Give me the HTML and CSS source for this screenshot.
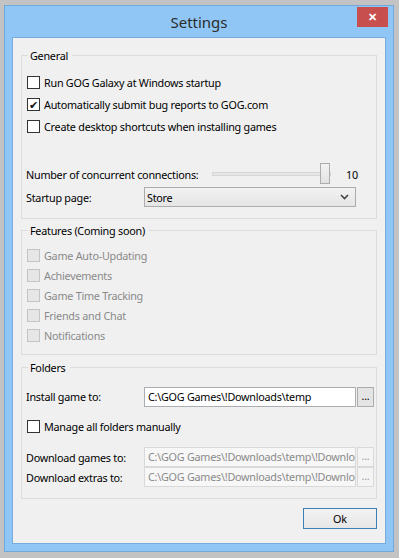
FILE: index.html
```html
<!DOCTYPE html>
<html lang="en">
<head>
  <meta charset="UTF-8" />
  <title>Settings</title>
  <link rel="stylesheet" href="styles.css">
</head>
<body>
  <div class="window">
    <div class="titlebar">
      <span></span>
      <div class="title">Settings</div>
      <div class="close">&#x2715;</div>
    </div>

    <div class="content">
      <fieldset class="group general">
        <legend>General</legend>
        <div class="check-row"><span class="box"></span>Run GOG Galaxy at Windows startup</div>
        <div class="check-row"><span class="box checked">&#x2714;</span>Automatically submit bug reports to GOG.com</div>
        <div class="check-row"><span class="box"></span>Create desktop shortcuts when installing games</div>

        <div class="slider-row">
          <span class="label-wide">Number of concurrent connections:</span>
          <div class="track"><span class="thumb"></span></div>
          <span class="slider-value">10</span>
        </div>
        <div class="field-row startup">
          <span class="label">Startup page:</span>
          <div class="select">
            <span>Store</span>
            <svg width="9" height="6" viewBox="0 0 9 6"><path d="M1 1 L4.5 4.5 L8 1" fill="none" stroke="#444" stroke-width="1.6"/></svg>
          </div>
        </div>
      </fieldset>

      <fieldset class="group features">
        <legend>Features (Coming soon)</legend>
        <div class="check-row disabled"><span class="box"></span>Game Auto-Updating</div>
        <div class="check-row disabled"><span class="box"></span>Achievements</div>
        <div class="check-row disabled"><span class="box"></span>Game Time Tracking</div>
        <div class="check-row disabled"><span class="box"></span>Friends and Chat</div>
        <div class="check-row disabled"><span class="box"></span>Notifications</div>
      </fieldset>

      <fieldset class="group folders">
        <legend>Folders</legend>
        <div class="field-row install">
          <span class="label">Install game to:</span>
          <div class="input">C:\GOG Games\!Downloads\temp</div>
          <div class="browse">...</div>
        </div>
        <div class="check-row manage"><span class="box"></span>Manage all folders manually</div>
        <div class="field-row path-row">
          <span class="label">Download games to:</span>
          <div class="input off">C:\GOG Games\!Downloads\temp\!Downlo</div>
          <div class="browse off">...</div>
        </div>
        <div class="field-row path-row">
          <span class="label">Download extras to:</span>
          <div class="input off">C:\GOG Games\!Downloads\temp\!Downlo</div>
          <div class="browse off">...</div>
        </div>
      </fieldset>

      <div class="buttons">
        <div class="ok">Ok</div>
      </div>
    </div>
  </div>
</body>
</html>
```

FILE: styles.css
```css
body {
  margin: 0;
  background-color: #c3c3c3;
  font-family: "Noto Sans", "Open Sans", sans-serif;
  font-size: 10.8px;
  letter-spacing: -0.25px;
  color: #000;
  padding: 5px 5px 6px 4px;
}

.window {
  height: 545px;
  background-color: #8fc6f6;
  border: 1px solid #72a9dc;
  display: flex;
  flex-direction: column;
}

.titlebar {
  height: 31px;
  display: grid;
  grid-template-columns: 1fr auto 1fr;
  align-items: start;
}

.title {
  font-size: 15px;
  letter-spacing: 0;
  color: #2c2c2c;
  line-height: 31px;
  padding-top: 1px;
}

.close {
  justify-self: end;
  margin: 1px 5px 0 0;
  width: 31px;
  height: 20px;
  background-color: #c7504f;
  color: #fff;
  font-size: 11px;
  font-weight: bold;
  line-height: 20px;
  text-align: center;
}

.content {
  flex: 1;
  margin: 0 7px 7px 7px;
  background-color: #f0f0f0;
  border: 1px solid #78acdc;
  padding: 10px 8px 0 8px;
  display: flex;
  flex-direction: column;
}

.group {
  margin: 0;
  border: 1px solid #dcdcdc;
  padding: 0 0 0 4px;
}

.group legend {
  padding: 0 4px 0 2px;
  margin-left: 2px;
  line-height: 15px;
}

.general {
  padding-top: 8px;
  padding-bottom: 10px;
}

.features {
  margin-top: 4px;
  padding-top: 7px;
  padding-bottom: 9px;
}

.folders {
  margin-top: 5px;
  padding-top: 11px;
  padding-bottom: 11px;
}

.check-row {
  height: 22px;
  display: flex;
  align-items: center;
  white-space: nowrap;
}

.features .check-row {
  height: 20px;
}

.box {
  flex: none;
  width: 11px;
  height: 11px;
  border: 1px solid #333;
  background-color: #fff;
  margin: 0 4px 0 1px;
  font-size: 11px;
  letter-spacing: 0;
  line-height: 11px;
  text-align: center;
  color: #111;
}

.disabled {
  color: #8a8a8a;
}

.disabled .box {
  border-color: #c4c4c4;
  background-color: #e6e6e6;
}

.slider-row {
  margin-top: 26px;
  height: 22px;
  display: flex;
  align-items: center;
}

.label-wide {
  flex: 1;
  white-space: nowrap;
}

.track {
  flex: none;
  position: relative;
  width: 117px;
  height: 2px;
  border: 1px solid #d6d6d6;
  background-color: #e7e7e7;
}

.thumb {
  position: absolute;
  right: 0;
  top: -10px;
  width: 8px;
  height: 19px;
  border: 1px solid #acacac;
  background: linear-gradient(#f2f2f2, #e3e3e3);
}

.slider-value {
  flex: none;
  width: 11px;
  margin: 0 19px 0 15px;
}

.field-row {
  display: flex;
  align-items: center;
  height: 22px;
  white-space: nowrap;
}

.startup {
  margin-top: 1px;
}

.label {
  flex: none;
  width: 118px;
}

.select {
  height: 18px;
  border: 1px solid #acacac;
  background: linear-gradient(#f2f2f2, #e5e5e5);
  display: flex;
  align-items: center;
  justify-content: space-between;
  padding: 0 6px 0 2px;
  width: 202px;
}

.install {
  height: 21px;
}

.input {
  flex: none;
  width: 204px;
  height: 18px;
  border: 1px solid #abadb3;
  background-color: #fff;
  padding: 0 3px;
  line-height: 18px;
  white-space: nowrap;
  overflow: hidden;
}

.input.off {
  border-color: #d9d9d9;
  background-color: #f7f7f7;
  color: #8a8a8a;
}

.browse {
  flex: none;
  margin-left: 1px;
  width: 15px;
  height: 18px;
  border: 1px solid #acacac;
  background-color: #e4e4e4;
  text-align: center;
  line-height: 16px;
}

.browse.off {
  border-color: #d9d9d9;
  background-color: #f4f4f4;
  color: #9a9a9a;
}

.manage {
  margin-top: 8px;
}

.path-row {
  height: 20px;
}

.manage + .path-row {
  margin-top: 10px;
}

.buttons {
  display: flex;
  justify-content: flex-end;
  margin-top: 9px;
}

.ok {
  width: 72px;
  height: 19px;
  border: 1px solid #3c7fb1;
  background: linear-gradient(#f2f2f2, #e6e6e6);
  text-align: center;
  line-height: 19px;
  letter-spacing: 0;
}
```
